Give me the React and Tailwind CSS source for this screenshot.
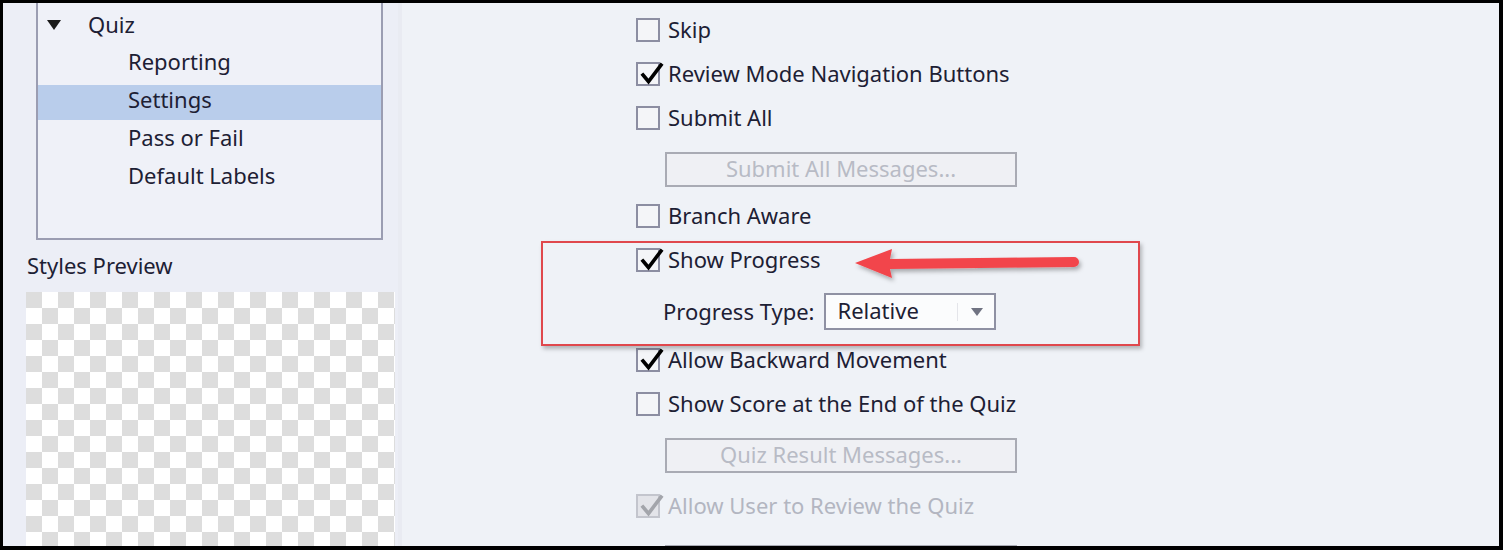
import React from "react";

const FONT = { fontFamily: '"Noto Sans", "Open Sans", sans-serif' };

function Check({ disabled }) {
  return (
    <svg width="28" height="28" viewBox="0 0 28 28" className="absolute left-0 top-[-4px]">
      <path
        d="M5 15 L10.5 21.5 L23 5"
        fill="none"
        stroke={disabled ? "#a3a5ab" : "#000000"}
        strokeWidth="3.6"
        strokeLinecap="square"
        strokeLinejoin="miter"
      />
    </svg>
  );
}

function CheckRow({ label, checked, disabled, className = "" }) {
  return (
    <div className={`flex h-[44px] shrink-0 items-center ${className}`}>
      <div
        className={`relative h-[24px] w-[24px] shrink-0 border-2 ${
          disabled ? "border-[#c3c5cd] bg-[#e3e4e9]" : "border-[#8c8ea2] bg-[#f4f5f8]"
        }`}
      >
        {checked && <Check disabled={disabled} />}
      </div>
      <span
        className={`ml-[8px] pb-[2px] text-[22px] leading-none ${
          disabled ? "text-[#b3b6c1]" : "text-[#1d2034]"
        }`}
      >
        {label}
      </span>
    </div>
  );
}

function DisabledButton({ label, className = "" }) {
  return (
    <div
      className={`ml-[29px] flex h-[35px] w-[352px] shrink-0 items-center justify-center border-2 border-[#a9abb4] bg-[#eff0f4] pb-[4px] text-[22px] leading-none text-[#b8bbc5] ${className}`}
    >
      {label}
    </div>
  );
}

export default function App() {
  const rows = [
    { label: "Reporting" },
    { label: "Settings", selected: true },
    { label: "Pass or Fail" },
    { label: "Default Labels" },
  ];
  return (
    <div
      style={FONT}
      className="relative h-[550px] w-[1503px] overflow-hidden border-t-[3px] border-l-[3px] border-r-4 border-b-4 border-black bg-[#eff2f7]"
    >
      <div className="flex h-full">
        {/* Left panel */}
        <div className="flex h-full w-[395px] shrink-0 flex-col bg-[#eceef6]">
          <div className="ml-[33px] h-[237px] w-[347px] shrink-0 border-x-2 border-b-2 border-[#9b9db2] bg-[#eff1f8] pt-[3px]">
            <div className="flex h-[38px] items-center pb-[2px]">
              <svg width="16" height="12" viewBox="0 0 16 12" className="ml-[8px] mt-[2px]">
                <path d="M1 1 L15 1 L8 11 Z" fill="#1a1a1a" />
              </svg>
              <span className="ml-[26px] text-[22px] leading-none text-[#1d2034]">Quiz</span>
            </div>
            {rows.map((r) => (
              <div
                key={r.label}
                className={`flex h-[38px] items-center pb-[4px] pl-[90px] text-[22px] leading-none text-[#1d2034] ${
                  r.selected ? "bg-[linear-gradient(to_bottom,transparent_3px,#b9cdeb_3px)]" : ""
                }`}
              >
                {r.label}
              </div>
            ))}
          </div>
          <div className="ml-[24px] mt-[14px] shrink-0 text-[22px] leading-none text-[#1d2034]">Styles Preview</div>
          <div
            className="ml-[23px] mt-[16px] w-[369px] flex-1 bg-[length:32px_32px] bg-[#ffffff]"
            style={{
              backgroundImage:
                "linear-gradient(45deg, #dddddd 25%, transparent 25%, transparent 75%, #dddddd 75%), linear-gradient(45deg, #dddddd 25%, transparent 25%, transparent 75%, #dddddd 75%)",
              backgroundPosition: "0 16px, 16px 0",
            }}
          />
        </div>
        <div className="w-[4px] shrink-0 bg-[#e9ebf2]" />

        {/* Right settings */}
        <div className="flex flex-1 flex-col pl-[234px] pt-[5px]">
          <CheckRow label="Skip" />
          <CheckRow label="Review Mode Navigation Buttons" checked />
          <CheckRow label="Submit All" />
          <DisabledButton label="Submit All Messages..." className="mt-[12px]" />
          <CheckRow label="Branch Aware" className="mt-[7px]" />
          <CheckRow label="Show Progress" checked />
          <div className="mt-[11px] flex h-[37px] shrink-0 items-center">
            <span className="ml-[27px] pb-[2px] text-[22px] leading-none text-[#1d2034]">Progress Type:</span>
            <div className="ml-[9px] flex h-[37px] w-[172px] items-center border-2 border-[#8f91a3] bg-[#fbfcfd]">
              <span className="ml-[12px] pb-[4px] text-[22px] leading-none text-[#1d2034]">Relative</span>
              <div className="ml-auto mr-[4px] h-[18px] w-px bg-[#e4e5ea]" />
              <svg width="14" height="10" viewBox="0 0 14 10" className="mr-[10px] ml-[8px]">
                <path d="M1 1 L13 1 L7 9 Z" fill="#707382" />
              </svg>
            </div>
          </div>
          <CheckRow label="Allow Backward Movement" checked className="mt-[8px]" />
          <CheckRow label="Show Score at the End of the Quiz" />
          <DisabledButton label="Quiz Result Messages..." className="mt-[12px]" />
          <CheckRow label="Allow User to Review the Quiz" checked disabled className="mt-[11px]" />
          <DisabledButton label="" className="mt-[17px]" />
        </div>
      </div>

      {/* Annotation: red box */}
      <div className="pointer-events-none absolute left-[538px] top-[238px] h-[105px] w-[599px] border-2 border-[#e0484d] shadow-[2px_3px_4px_rgba(0,0,0,0.25)]" />
      {/* Annotation: arrow */}
      <svg
        className="pointer-events-none absolute left-[847px] top-[240px]"
        width="240"
        height="46"
        viewBox="0 0 240 46"
      >
        <defs>
          <filter id="sh" x="-10%" y="-30%" width="120%" height="170%">
            <feDropShadow dx="2" dy="3" stdDeviation="2" floodColor="#000" floodOpacity="0.3" />
          </filter>
        </defs>
        <g filter="url(#sh)">
          <path d="M5 20 L42 6 L40 16 L224 14 A5 5 0 0 1 224 24 L40 26 L42 35 Z" fill="#f2454b" />
        </g>
      </svg>
    </div>
  );
}
